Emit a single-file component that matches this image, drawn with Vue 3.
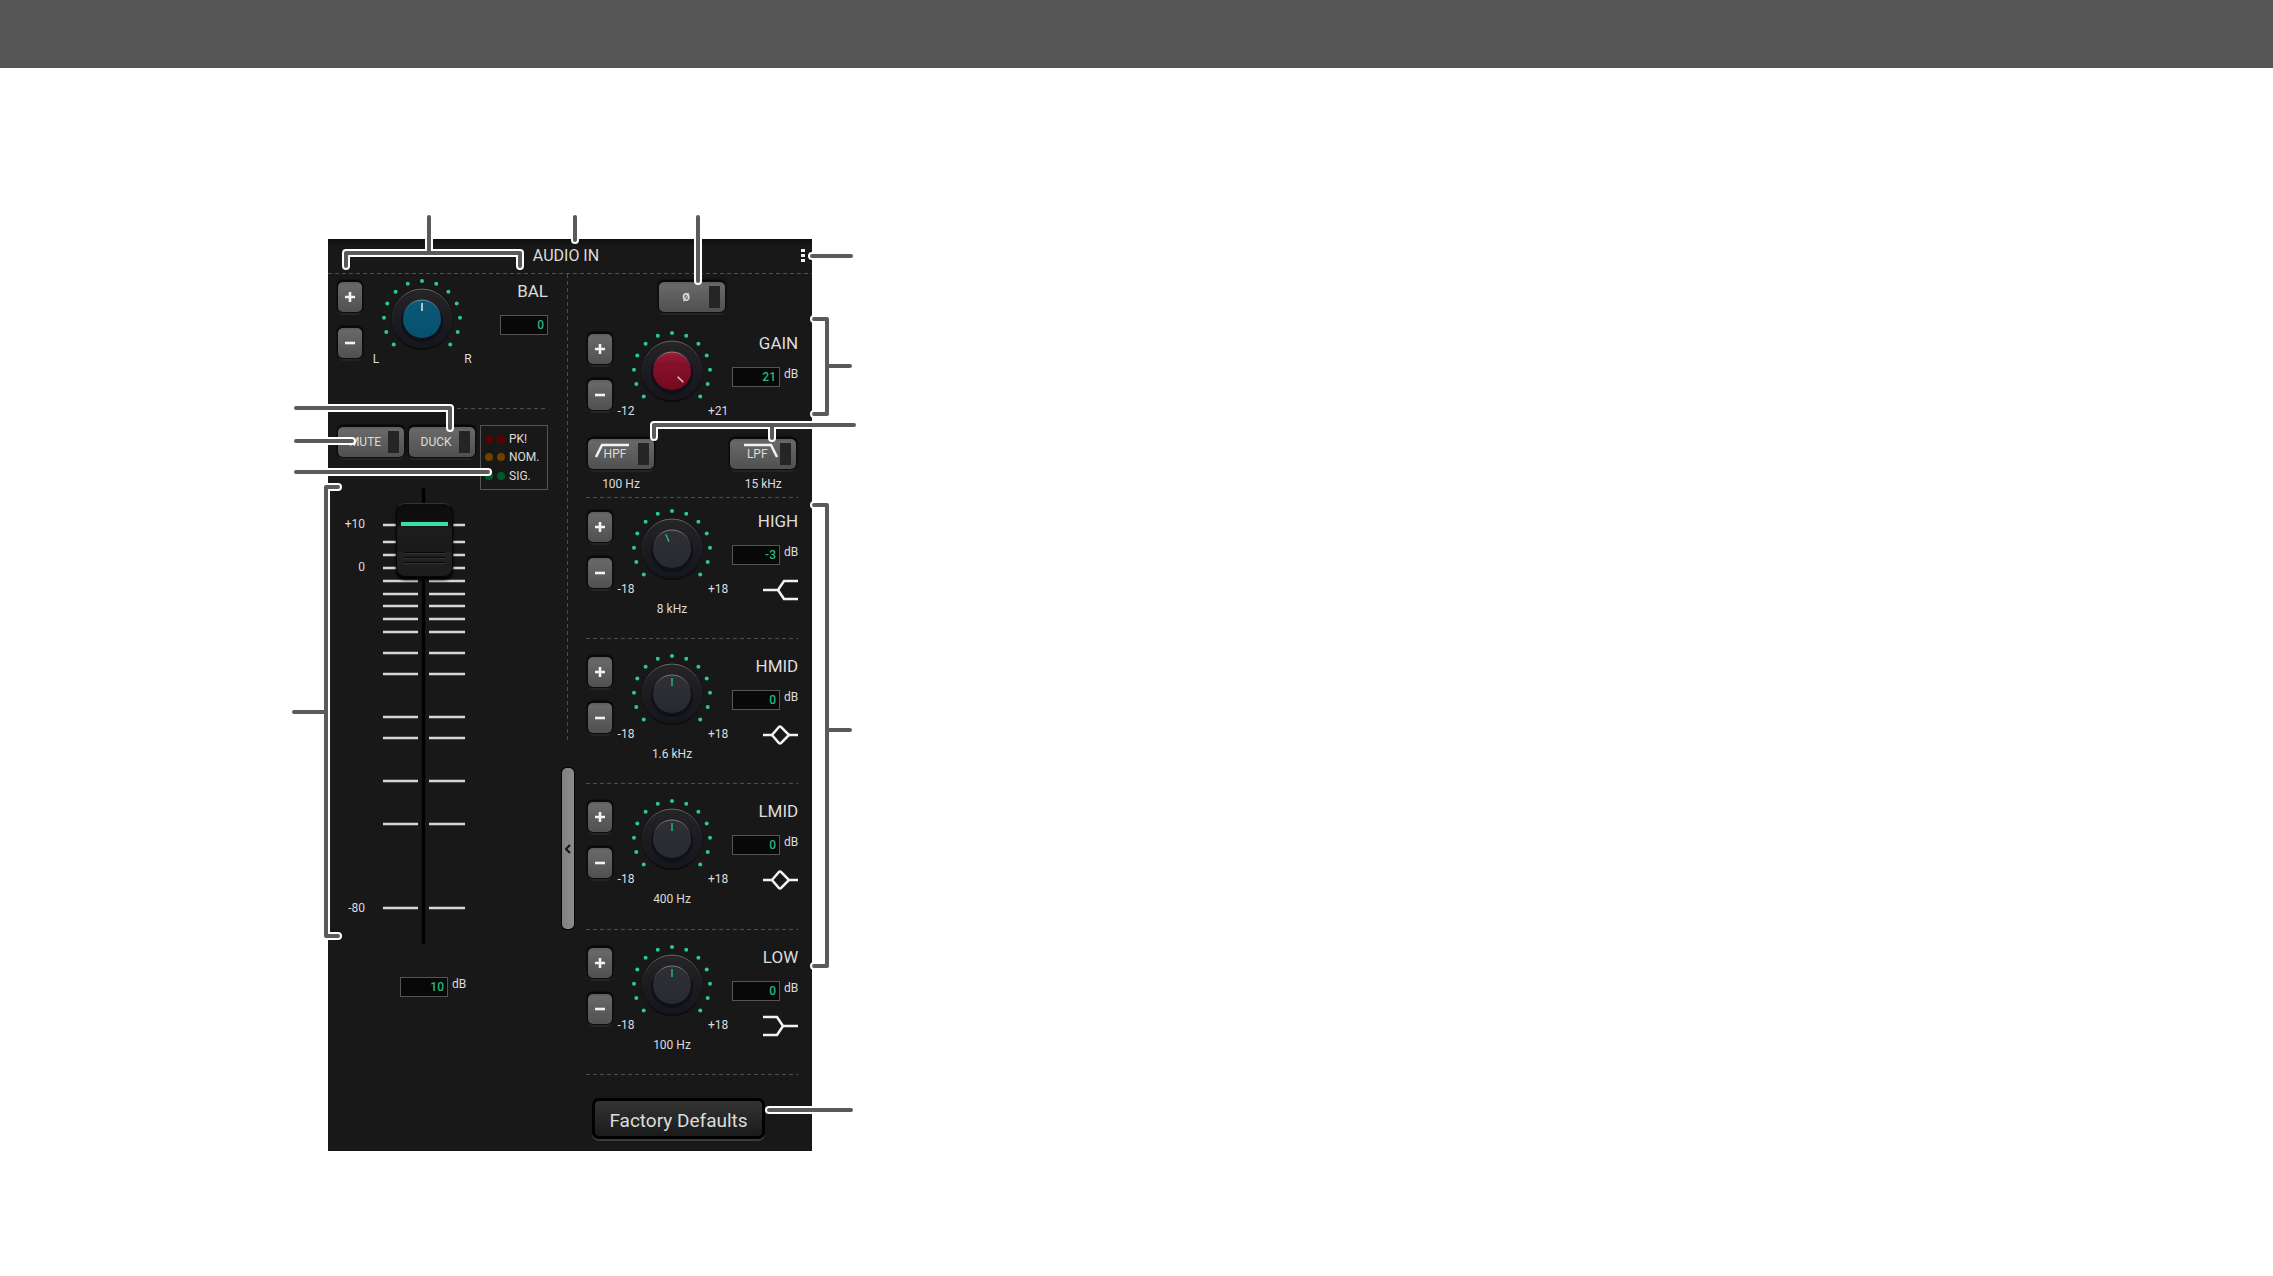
<script setup>
import { ref, reactive } from 'vue';

const bal = ref(0);
const level = ref(10);
const switches = reactive({ phase: false, mute: false, duck: false });

// channel strip bands, top to bottom
const bands = reactive([
  { name: 'GAIN', value: 21, min: -12, max: 21, color: 'red' },
  { name: 'HIGH', value: -3, min: -18, max: 18, color: 'grey', freq: '8 kHz', icon: ['M0 10H15L21 1H35', 'M15 10L21 19H35'] },
  { name: 'HMID', value: 0, min: -18, max: 18, color: 'grey', freq: '1.6 kHz', icon: ['M0 10H9M26 10H35', 'M9 10L15 3Q17 0 19 3L26 10L19 17Q17 20 15 17Z'] },
  { name: 'LMID', value: 0, min: -18, max: 18, color: 'grey', freq: '400 Hz', icon: ['M0 10H9M26 10H35', 'M9 10L15 3Q17 0 19 3L26 10L19 17Q17 20 15 17Z'] },
  { name: 'LOW', value: 0, min: -18, max: 18, color: 'grey', freq: '100 Hz', icon: ['M0 1H14L20 10H35', 'M0 19H14L20 10'] },
]);

const filters = reactive([
  { name: 'HPF', freq: '100 Hz', path: 'M8 18L14 6H41', on: false },
  { name: 'LPF', freq: '15 kHz', path: 'M14 6H41L47 18', on: false },
]);

const leds = [
  { name: 'PK!', color: '#5c0000' },
  { name: 'NOM.', color: '#6e4000' },
  { name: 'SIG.', color: '#00592c' },
];

// 13 dots around a knob, 22 degrees apart
const dots = Array.from({ length: 13 }, (_, i) => {
  const a = ((i - 6) * 22 * Math.PI) / 180;
  return { x: 40 + 38 * Math.sin(a), y: 40 - 38 * Math.cos(a) };
});

const ticks = [37, 54, 67, 80, 93, 106, 118, 131, 144, 165, 186, 229, 250, 293, 336, 420];
const scale = [
  { text: '+10', y: 40 },
  { text: '0', y: 83 },
  { text: '-80', y: 424 },
];

const callouts = [
  'M346 266V253H520V266M429 217V253',
  'M575 217V240',
  'M698 217V281',
  'M812 256H851',
  'M814 319H827V414H814M827 366H850',
  'M654 437V425H854M772 438V425',
  'M296 408H450V428',
  'M296 441H352',
  'M296 472H488',
  'M338 487H326V936H338M294 712H326',
  'M814 505H827V966H814M827 730H850',
  'M769 1110H851',
];

function angle(value, min, max) {
  return ((value - min) / (max - min)) * 270 - 135;
}

function step(band, d) {
  band.value = Math.min(band.max, Math.max(band.min, Number(band.value) + d));
}

function stepBal(d) {
  bal.value = Math.min(100, Math.max(-100, Number(bal.value) + d));
}

function reset() {
  bal.value = 0;
  level.value = 0;
  bands.forEach((b) => (b.value = 0));
}
</script>

<template>
  <div class="page">
    <header class="topbar"></header>

    <svg class="defs" width="0" height="0" aria-hidden="true">
      <defs>
        <linearGradient id="rim" x1="0" y1="0" x2="0" y2="1">
          <stop offset="0" stop-color="#6c6c6c" />
          <stop offset="0.3" stop-color="#2c2c2e" />
          <stop offset="1" stop-color="#0a0a0e" />
        </linearGradient>
        <linearGradient id="base" x1="0" y1="0" x2="0" y2="1">
          <stop offset="0" stop-color="#262628" />
          <stop offset="0.5" stop-color="#1b1b21" />
          <stop offset="1" stop-color="#15151b" />
        </linearGradient>
        <linearGradient id="cap-blue" x1="0" y1="0" x2="0" y2="1">
          <stop offset="0" stop-color="#0c5877" />
          <stop offset="1" stop-color="#05506f" />
        </linearGradient>
        <linearGradient id="cap-red" x1="0" y1="0" x2="0" y2="1">
          <stop offset="0" stop-color="#9a1d38" />
          <stop offset="0.3" stop-color="#85102b" />
          <stop offset="1" stop-color="#780920" />
        </linearGradient>
        <linearGradient id="cap-grey" x1="0" y1="0" x2="0" y2="1">
          <stop offset="0" stop-color="#2e3034" />
          <stop offset="1" stop-color="#282a32" />
        </linearGradient>
        <linearGradient id="cap-edge" x1="0" y1="0" x2="0" y2="1">
          <stop offset="0" stop-color="#fff" stop-opacity="0.4" />
          <stop offset="0.4" stop-color="#fff" stop-opacity="0" />
        </linearGradient>
      </defs>
    </svg>

    <main class="figure">
      <section class="panel">
        <div class="title">
          <h1>AUDIO IN</h1>
          <button class="menu" aria-label="Menu">
            <svg width="4" height="13"><path d="M0 0h4v3H0zM0 5h4v3H0zM0 10h4v3H0z" fill="#eee" /></svg>
          </button>
        </div>

        <div class="body">
          <!-- fader side -->
          <div class="left">
            <div class="balance">
              <div class="strip">
                <div class="steps">
                  <button class="step" aria-label="Balance up" @click="stepBal(1)">
                    <svg width="10" height="10"><path d="M5 0V10M0 5H10" /></svg>
                  </button>
                  <button class="step" aria-label="Balance down" @click="stepBal(-1)">
                    <svg width="10" height="10"><path d="M0 5H10" /></svg>
                  </button>
                </div>
                <div class="dial">
                  <div class="knob">
                    <svg width="80" height="80">
                      <circle v-for="(d, i) in dots" :key="i" :cx="d.x" :cy="d.y" r="2" fill="#2cc893" />
                      <circle cx="40" cy="40" r="31" fill="#0c0c0c" />
                      <circle cx="40" cy="40" r="30" fill="url(#base)" stroke="url(#rim)" />
                      <circle cx="40" cy="42" r="21" fill="#101018" />
                      <circle cx="40" cy="40" r="19" fill="url(#cap-blue)" stroke="url(#cap-edge)" />
                      <path d="M40 24V32" stroke="#a9c6d3" stroke-width="2" :transform="`rotate(${angle(bal, -100, 100)} 40 40)`" />
                    </svg>
                    <input v-model="bal" type="range" min="-100" max="100" aria-label="Balance knob" />
                  </div>
                  <div class="limits"><span>L</span><span>R</span></div>
                </div>
                <div class="readout">
                  <label for="bal">BAL</label>
                  <div class="value"><input id="bal" v-model="bal" type="text" /></div>
                </div>
              </div>
            </div>

            <div class="switches">
              <button class="switch" :aria-pressed="switches.mute" @click="switches.mute = !switches.mute">
                <span>MUTE</span><i></i>
              </button>
              <button class="switch" :aria-pressed="switches.duck" @click="switches.duck = !switches.duck">
                <span>DUCK</span><i></i>
              </button>
              <ul class="leds">
                <li v-for="led in leds" :key="led.name">
                  <b :style="{ background: led.color }"></b><b :style="{ background: led.color }"></b>{{ led.name }}
                </li>
              </ul>
            </div>

            <div class="fader">
              <svg width="130" height="460">
                <rect x="83" y="0" width="5" height="456" fill="#131313" />
                <rect x="84" y="0" width="3" height="456" fill="#000" />
                <path v-for="y in ticks" :key="y" :d="`M45 ${y}H80M91 ${y}H127`" stroke="#d6d6d6" stroke-width="2.5" />
                <text v-for="s in scale" :key="s.text" x="27" :y="s.y" text-anchor="end">{{ s.text }}</text>
              </svg>
              <input v-model="level" type="range" min="-80" max="10" aria-label="Level fader" />
            </div>

            <div class="value level">
              <input id="level" v-model="level" type="text" aria-label="Level" />
              <label for="level">dB</label>
            </div>
          </div>

          <div class="divider">
            <div class="vline"></div>
            <button class="collapse" aria-label="Collapse">
              <svg width="6" height="10"><path d="M5 1L1 5L5 9" fill="none" stroke="#151515" stroke-width="2" /></svg>
            </button>
          </div>

          <!-- input and EQ side -->
          <div class="right">
            <div v-for="band in bands" :key="band.name" class="band" :class="band.name.toLowerCase()">
              <button v-if="!band.freq" class="switch phase" :aria-pressed="switches.phase" @click="switches.phase = !switches.phase">
                <span>Ø</span><i></i>
              </button>
              <div class="strip">
                <div class="steps">
                  <button class="step" :aria-label="band.name + ' up'" @click="step(band, 1)">
                    <svg width="10" height="10"><path d="M5 0V10M0 5H10" /></svg>
                  </button>
                  <button class="step" :aria-label="band.name + ' down'" @click="step(band, -1)">
                    <svg width="10" height="10"><path d="M0 5H10" /></svg>
                  </button>
                </div>
                <div class="dial">
                  <div class="knob">
                    <svg width="80" height="80">
                      <circle v-for="(d, i) in dots" :key="i" :cx="d.x" :cy="d.y" r="2" fill="#2cc893" />
                      <circle cx="40" cy="40" r="31" fill="#0c0c0c" />
                      <circle cx="40" cy="40" r="30" fill="url(#base)" stroke="url(#rim)" />
                      <circle cx="40" cy="42" r="21" fill="#101018" />
                      <circle cx="40" cy="40" r="19" :fill="`url(#cap-${band.color})`" stroke="url(#cap-edge)" />
                      <path
                        d="M40 24V32"
                        :stroke="band.color === 'red' ? '#e8c3ca' : '#23b384'"
                        stroke-width="1.5"
                        :transform="`rotate(${angle(band.value, band.min, band.max)} 40 40)`"
                      />
                    </svg>
                    <input v-model="band.value" type="range" :min="band.min" :max="band.max" :aria-label="band.name + ' knob'" />
                  </div>
                  <div class="limits"><span>{{ band.min }}</span><span>+{{ band.max }}</span></div>
                  <div v-if="band.freq" class="freq">{{ band.freq }}</div>
                </div>
                <div class="readout">
                  <label :for="band.name">{{ band.name }}</label>
                  <div class="value"><input :id="band.name" v-model="band.value" type="text" /><span>dB</span></div>
                  <svg v-if="band.icon" class="curve" width="35" height="20">
                    <path v-for="p in band.icon" :key="p" :d="p" />
                  </svg>
                </div>
              </div>
              <div v-if="!band.freq" class="filters">
                <div v-for="f in filters" :key="f.name">
                  <button class="switch" :aria-pressed="f.on" @click="f.on = !f.on">
                    <span>{{ f.name }}</span><i></i>
                    <svg width="66" height="30"><path :d="f.path" /></svg>
                  </button>
                  <div class="freq">{{ f.freq }}</div>
                </div>
              </div>
            </div>
            <button class="defaults" @click="reset">Factory Defaults</button>
          </div>
        </div>
      </section>

      <!-- leader lines over the panel -->
      <svg class="callouts" viewBox="328 239 484 912" width="484" height="912">
        <path v-for="c in callouts" :key="c" :d="c" stroke="#fff" stroke-width="8" />
        <path v-for="c in callouts" :key="c + 'i'" :d="c" stroke="#5a5a5a" stroke-width="4" />
      </svg>
    </main>
  </div>
</template>

<style>
body {
  margin: 0;
  background: #fff;
}
</style>

<style scoped>
.page {
  font-family: Roboto, "Liberation Sans", sans-serif;
  font-size: 12px;
  line-height: 14px;
  color: #dcdcdc;
}

.topbar {
  height: 68px;
  background: #565656;
}

.defs {
  display: block;
}

.figure {
  position: relative;
  width: 484px;
  margin: 171px 0 0 328px;
}

.panel {
  background: #181818;
}

.callouts {
  position: absolute;
  top: 0;
  left: 0;
  overflow: visible;
  pointer-events: none;
  fill: none;
  stroke-linecap: round;
  stroke-linejoin: round;
}

button,
input {
  font-family: inherit;
  color: inherit;
  padding: 0;
  border: 0;
  margin: 0;
  box-sizing: border-box;
}

button {
  cursor: pointer;
}

.title {
  display: flex;
  align-items: center;
  height: 35px;
  padding: 0 7px 2px 3px;
  box-sizing: border-box;
  background:
    repeating-linear-gradient(90deg, #505050 0 4px, transparent 4px 7px) bottom / 100% 1px no-repeat,
    linear-gradient(#0d0d0d, #181818 7px);
}

.title h1 {
  flex: 1;
  margin: 0;
  font-size: 16px;
  line-height: 20px;
  font-weight: 400;
  text-align: center;
}

.menu {
  display: flex;
  background: none;
}

.body {
  display: flex;
}

.left {
  width: 234px;
  padding: 0 14px 0 10px;
  box-sizing: border-box;
}

.right {
  flex: 1;
  padding: 0 14px 12px 12px;
}

/* dashed rule below a block */
.balance,
.band {
  box-sizing: border-box;
  background: repeating-linear-gradient(90deg, #4c4c4c 0 4px, transparent 4px 7px) bottom / 100% 1px no-repeat;
}

.balance {
  height: 135px;
  padding-top: 5px;
}

.band {
  height: 145px;
  padding: 15px 0 0 2px;
}

.band.gain {
  height: auto;
  padding: 8px 0 7px 2px;
}

.band.high {
  height: 141px;
  padding-top: 11px;
}

.band.lmid {
  height: 146px;
}

.strip {
  display: flex;
}

.steps {
  display: flex;
  flex-direction: column;
  gap: 16px;
  padding-top: 3px;
}

.step,
.switch {
  background: linear-gradient(#5c5c5c, #686868 10%, #505050);
  border-radius: 5px;
  box-shadow: 0 0 0 1px #0c0c0c, 0 -1px 2px 1px #000, 0 3px 1px #262626;
}

.step {
  display: flex;
  align-items: center;
  justify-content: center;
  width: 24px;
  height: 30px;
}

.step path {
  stroke: #f2f2f2;
  stroke-width: 2.6;
}

.dial {
  width: 120px;
}

.knob {
  position: relative;
  width: 80px;
  height: 80px;
  margin: 0 auto;
}

.knob svg {
  display: block;
  overflow: visible;
}

.knob input {
  position: absolute;
  inset: 0;
  width: 100%;
  height: 100%;
  opacity: 0;
}

.limits {
  display: flex;
  justify-content: space-between;
  margin-top: -7px;
  padding: 0 4px;
}

.limits span {
  width: 20px;
  text-align: center;
}

.freq {
  margin-top: 6px;
  text-align: center;
}

.readout {
  flex: 1;
  display: flex;
  flex-direction: column;
  align-items: flex-end;
}

.readout label {
  padding-top: 2px;
  font-size: 17px;
  line-height: 20px;
}

.value {
  display: flex;
  gap: 4px;
}

.readout .value {
  margin-top: 14px;
}

.value input {
  width: 48px;
  height: 20px;
  padding-right: 3px;
  border: 1px solid #555;
  background: #080808;
  color: #27b582;
  font-size: 12px;
  font-weight: 500;
  text-align: right;
}

.curve {
  margin-top: 15px;
  overflow: visible;
}

.curve path {
  fill: none;
  stroke: #f2f2f2;
  stroke-width: 2.5;
}

.switches {
  display: flex;
  gap: 5px;
  padding-top: 16px;
}

.switch {
  position: relative;
  display: flex;
  align-items: center;
  width: 66px;
  height: 30px;
  padding-right: 5px;
  font-size: 12px;
}

.switches .switch {
  margin-top: 2px;
}

.switch span {
  flex: 1;
  padding-left: 4px;
  text-align: center;
}

.switch i {
  width: 11px;
  height: 22px;
  background: #252525;
}

.switch svg {
  position: absolute;
  top: 0;
  left: 0;
  fill: none;
  stroke: #f2f2f2;
  stroke-width: 2.5;
}

.phase {
  margin: 0 0 19px 71px;
}

.phase span {
  font-size: 11px;
  font-weight: 700;
}

.filters {
  display: flex;
  justify-content: space-between;
  padding-right: 2px;
  margin-top: 21px;
}

.filters .freq {
  margin-top: 8px;
}

.leds {
  display: flex;
  flex-direction: column;
  justify-content: space-around;
  width: 68px;
  height: 65px;
  margin: 0;
  padding: 4px 0 4px 4px;
  box-sizing: border-box;
  border: 1px solid #555;
  list-style: none;
}

.leds li {
  display: flex;
  align-items: center;
}

.leds b {
  width: 8px;
  height: 8px;
  margin-right: 4px;
  border-radius: 50%;
}

.fader {
  position: relative;
  margin-top: -2px;
}

.fader svg {
  display: block;
}

.fader text {
  fill: #dcdcdc;
  font-size: 12px;
}

.fader input {
  position: absolute;
  top: 15px;
  left: 58px;
  width: 57px;
  height: 459px;
  appearance: none;
  background: none;
  writing-mode: vertical-lr;
  direction: rtl;
}

.fader input::-webkit-slider-thumb {
  appearance: none;
  width: 57px;
  height: 74px;
  border: 1px solid #050505;
  border-top-color: #333;
  border-radius: 9px;
  box-shadow: 0 3px 3px #000;
  background:
    linear-gradient(#35dfa5, #35dfa5) center 18px / 47px 4px no-repeat,
    linear-gradient(#080808 1px, #333 1px 2px, transparent 2px 5px, #080808 5px 6px, #333 6px 7px, transparent 7px 10px, #080808 10px 11px, #333 11px) center 48px / 41px 12px no-repeat,
    linear-gradient(#0c0c0c, #111 28%, #1e1e1e 34%, #191919 65%, #222 68%, #1c1c1c);
}

.level {
  margin: 29px 0 0 62px;
}

.divider {
  width: 12px;
}

.vline {
  width: 1px;
  height: 468px;
  margin: 0 0 26px 5px;
  background: repeating-linear-gradient(#4c4c4c 0 4px, transparent 4px 7px);
}

.collapse {
  display: flex;
  align-items: center;
  justify-content: center;
  width: 12px;
  height: 161px;
  border-radius: 5px;
  background: linear-gradient(90deg, #808080, #8c8c8c);
  box-shadow: 0 0 0 1px #050505;
}

.defaults {
  display: block;
  width: 173px;
  height: 41px;
  margin: 23px 0 0 6px;
  padding-top: 3px;
  border: 3px solid #000;
  border-radius: 7px;
  background: linear-gradient(#333, #1b1b1b);
  box-shadow: 0 2px 0 #3a3a3a;
  font-size: 19px;
}
</style>
